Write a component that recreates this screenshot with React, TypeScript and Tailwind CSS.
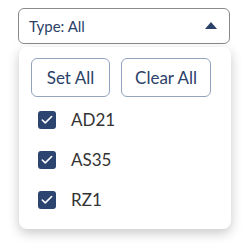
import { Check } from 'lucide-react';

const items = ['AD21', 'AS35', 'RZ1'];

export default function App() {
  return (
    <div className="h-[248px] w-[250px] bg-white pt-2 pl-[18px] font-['Lato',sans-serif]">
      <div className="flex h-9 w-[212px] items-center justify-between rounded-md border-[1.5px] border-[#8a8a8a] pl-[10px] pr-3">
        <span className="text-[15px] text-[#2b4168]">Type: All</span>
        <svg width="12" height="7" viewBox="0 0 12 7" className="mb-px">
          <path d="M0 7 L6 0 L12 7 Z" fill="#2b4168" />
        </svg>
      </div>
      <div className="mt-[3px] ml-px h-[182px] w-[212px] rounded-lg bg-white px-3 pt-[11px] shadow-[0_4px_12px_rgba(0,0,0,0.22)]">
        <div className="flex gap-[11px]">
          <button className="h-[39px] w-[79px] rounded-md border border-[#93a3bf] text-[17px] text-[#2b4168]">Set All</button>
          <button className="h-[39px] w-[90px] rounded-md border border-[#93a3bf] text-[17px] text-[#2b4168]">Clear All</button>
        </div>
        <div className="mt-[14px] flex flex-col gap-[22px] pl-[7px]">
          {items.map((it) => (
            <label key={it} className="flex h-[18px] items-center gap-[15px]">
              <span className="flex h-[18px] w-[18px] items-center justify-center rounded-[3px] bg-[#2b4570]">
                <Check className="h-[14px] w-[14px] text-white" strokeWidth={2.75} />
              </span>
              <span className="text-[17px] text-[#333333]">{it}</span>
            </label>
          ))}
        </div>
      </div>
    </div>
  );
}
